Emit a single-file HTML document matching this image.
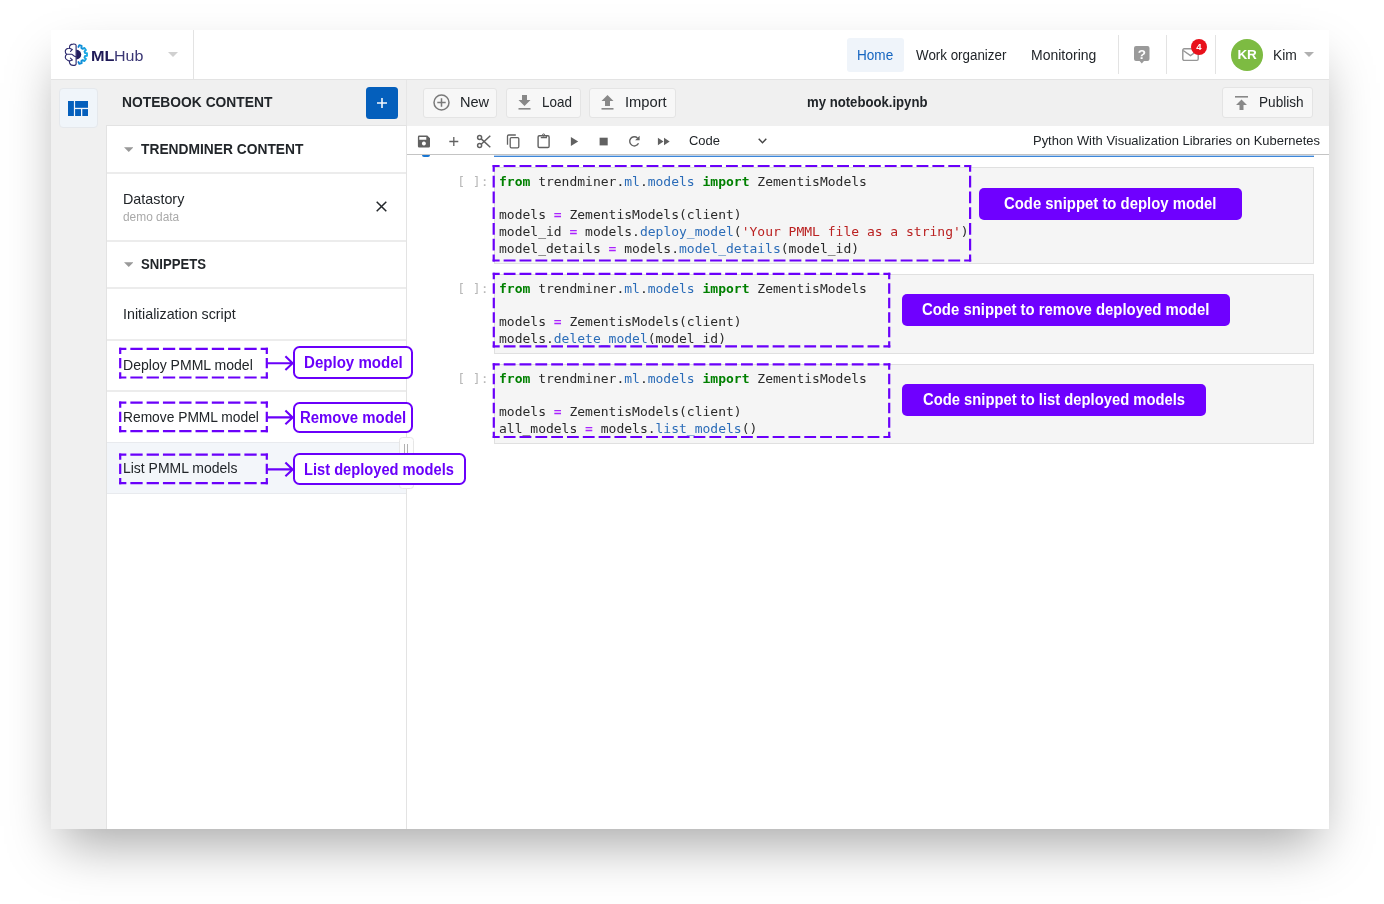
<!DOCTYPE html>
<html lang="en">
<head>
<meta charset="utf-8">
<title>MLHub - my notebook.ipynb</title>
<style>
*{box-sizing:border-box;margin:0;padding:0}
html,body{width:1384px;height:904px;overflow:hidden;background:#fff}
body{position:relative;will-change:transform;font-family:"Liberation Sans",sans-serif;color:#212529;font-size:14px}
.a{position:absolute}
.t{position:absolute;white-space:nowrap;line-height:1}
.win{left:50.500px;top:29.500px;width:1278.500px;height:799px;background:#fff;box-shadow:0 25px 50px -10px rgba(0,0,0,.35)}
.grey{background:#f0f0f0}
.ln{background:#e3e3e3}
.btn{background:#f7f7f7;border:1px solid #e4e4e4;border-radius:3px}
.b{font-weight:bold}
.pur{color:#6a00fa}
.lbl{border:2.200px solid #6a00fa;border-radius:6.500px;background:#fff}
.fill{background:#6f00ff;border-radius:5px}
.cell{background:#f5f5f5;border:1px solid #e0e0e0}
.code{position:absolute;white-space:pre;font-family:"DejaVu Sans Mono","Liberation Mono",monospace;font-size:13px;line-height:16.9px;color:#2a2a2a}
.k{color:#008000;font-weight:bold}
.o{color:#aa22ff;font-weight:bold}
.p{color:#2b6cb8}
.s{color:#ba2121}
.pr{color:#b8b8b8}
</style>
</head>
<body>
<!-- window -->
<div class="a win"></div>

<!-- header -->
<div class="a ln" style="left:51px;top:79px;width:1278px;height:1px"></div>
<div class="a ln" style="left:193px;top:30px;width:1px;height:49px"></div>


<!-- logo -->
<svg class="a" id="logo" style="left:60px;top:40px" width="35" height="30" viewBox="60 40 35 30" fill="none" stroke-linecap="round" stroke-linejoin="round">
  <defs><linearGradient id="gg" x1="77" y1="0" x2="88" y2="0" gradientUnits="userSpaceOnUse"><stop offset="0" stop-color="#0b78cc"/><stop offset="1" stop-color="#1cb2e8"/></linearGradient></defs>
  <path d="M76.100 45.600C76.100 44.300 74.400 43.900 73.100 44.100C71.200 44.300 69.600 45.300 69.600 46.800C69.500 47.400 69.500 47.900 69.500 48.300C68.800 48.200 68.200 48.300 67.600 48.500C66 49 65.200 50.300 65.300 51.600C65.300 52.800 65.800 53.700 66.500 54.300C65.800 55 65.300 56 65.300 57.300C65.300 58.800 66.200 59.800 67.600 60.200C68.200 60.600 68.800 60.900 69.500 61.100C69.400 61.700 69.500 62.300 69.600 62.900C70 64.400 71.400 65.400 73.100 65.400C74.600 65.500 76.100 65 76.100 63.900Z" stroke="#2d2a6e" stroke-width="1.150" fill="#fff"/>
  <path d="M66.500 54.300H71.600C72.800 54.300 73.300 56.400 76 56.800M69.500 48.300L72.400 49.400L70.500 51.400M69.500 61.100L72.400 59.900L70.400 58.200" stroke="#2d2a6e" stroke-width="1.100"/>
  <path d="M76.300 49.700A4.900 4.900 0 0 1 76.300 59.500Z" fill="#221c5c" stroke="none"/>
  <path d="M78.46 46.95L79.33 45.16L81.69 45.93L81.34 47.89L82.73 48.90L84.49 47.96L85.95 49.97L84.52 51.35L85.05 52.98L87.02 53.26L87.02 55.74L85.05 56.02L84.52 57.65L85.95 59.03L84.49 61.04L82.73 60.10L81.34 61.11L81.69 63.07L79.33 63.84L78.46 62.05" stroke="url(#gg)" stroke-width="1.900" stroke-linejoin="round"/>
</svg>
<div class="t b" id="lg-ml" style="left:91.2px;top:47.60px;font-size:15px;color:#1f1a57;transform:scaleX(1.0844);transform-origin:0 0">ML</div>
<div class="t" id="lg-hub" style="left:114.3px;top:47.60px;font-size:15px;color:#3b3775;transform:scaleX(1.0679);transform-origin:0 0">Hub</div>
<svg class="a" style="left:168px;top:52px" width="10" height="5" viewBox="0 0 10 5"><path d="M0 0H10L5 5Z" fill="#d0d0d0"/></svg>

<!-- nav -->
<div class="a" style="left:847px;top:38px;width:57px;height:34px;background:#eff4fa;border-radius:3px"></div>
<div class="t" id="nav-home" style="left:856.9px;top:48.15px;font-size:14px;color:#1565c0;transform:scaleX(0.9690);transform-origin:0 0">Home</div>
<div class="t" id="nav-work" style="left:916.3px;top:48.15px;font-size:14px;transform:scaleX(0.9549);transform-origin:0 0">Work organizer</div>
<div class="t" id="nav-mon" style="left:1030.5px;top:48.15px;font-size:14px;transform:scaleX(0.9989);transform-origin:0 0">Monitoring</div>
<div class="a ln" style="left:1118px;top:35px;width:1px;height:39px"></div>
<div class="a ln" style="left:1166px;top:35px;width:1px;height:39px"></div>
<div class="a ln" style="left:1215px;top:35px;width:1px;height:39px"></div>
<!-- help icon -->
<svg class="a" style="left:1134px;top:46px" width="16" height="18" viewBox="0 0 16 18"><path d="M2 0H13.500A2 2 0 0 1 15.500 2V13A2 2 0 0 1 13.500 15H10L7.800 17.600L5.600 15H2A2 2 0 0 1 0 13V2A2 2 0 0 1 2 0Z" fill="#9a9a9a"/><text x="7.800" y="12.600" font-family="Liberation Sans, sans-serif" font-weight="bold" font-size="13.500" fill="#fff" text-anchor="middle">?</text></svg>
<!-- mail icon -->
<svg class="a" style="left:1182px;top:48px" width="17" height="14" viewBox="0 0 17 14" fill="none" stroke="#969696" stroke-width="1.400"><rect x=".8" y=".8" width="15.400" height="11.600" rx="1.300"/><path d="M1.200 2.500L8.500 7.600L15.800 2.500"/></svg>
<div class="a" style="left:1191px;top:38.700px;width:16px;height:16px;border-radius:50%;background:#e8111b"></div>
<div class="t b" style="left:1191px;top:41.700px;width:16px;text-align:center;font-size:9.500px;color:#fff">4</div>
<!-- avatar -->
<div class="a" style="left:1230.800px;top:38.500px;width:32.200px;height:32.200px;border-radius:50%;background:#7dbb42"></div>
<div class="t b" style="left:1230.800px;top:47.800px;width:32.200px;text-align:center;font-size:13.500px;color:#fff;letter-spacing:-.3px">KR</div>
<div class="t" id="kim" style="left:1272.6px;top:48.15px;font-size:14px;transform:scaleX(0.9907);transform-origin:0 0">Kim</div>
<svg class="a" style="left:1303.700px;top:52px" width="10" height="5" viewBox="0 0 10 5"><path d="M0 0H10L5 5Z" fill="#b0b0b0"/></svg>

<!-- left rail + top bars -->
<div class="a grey" style="left:51px;top:80px;width:1278px;height:46px"></div>
<div class="a grey" style="left:51px;top:80px;width:56px;height:749px"></div>


<!-- rail icon -->
<div class="a" style="left:58.500px;top:88.400px;width:39px;height:39.300px;background:#f0f5fa;border:1px solid #e5e8ec;border-radius:4px"></div>
<svg class="a" style="left:68px;top:100.900px" width="20.200" height="15.300" viewBox="0 0 20.200 15.300" fill="#045fbc"><rect x="0" y="0" width="5.900" height="15.300"/><rect x="7.100" y="0" width="13.100" height="6.800"/><rect x="7.100" y="8.100" width="5.900" height="7.200"/><rect x="14.300" y="8.100" width="5.900" height="7.200"/></svg>

<!-- side panel -->
<div class="t b" id="nbc" style="left:121.7px;top:95.43px;font-size:14.5px;transform:scaleX(0.9526);transform-origin:0 0">NOTEBOOK CONTENT</div>
<div class="a" style="left:366px;top:86.700px;width:32px;height:32.300px;background:#045fbc;border-radius:3.500px"></div>
<div class="a" style="left:406px;top:80px;width:1px;height:46px;background:#e6e6e6"></div>
<svg class="a" style="left:377px;top:98px" width="10" height="10" viewBox="0 0 10 10" stroke="#f4f8fc" stroke-width="1.600"><path d="M5 0V10M0 5H10"/></svg>
<div class="a" style="left:106px;top:125px;width:301px;height:704px;background:#fff;border-left:1px solid #e3e3e3;border-right:1px solid #e3e3e3;border-top:1px solid #e3e3e3"></div>

<svg class="a" style="left:123.500px;top:146.500px" width="9.500" height="5" viewBox="0 0 10 5"><path d="M0 0H10L5 5Z" fill="#999"/></svg>
<div class="t b" id="tmc" style="left:140.9px;top:141.73px;font-size:14.5px;transform:scaleX(0.9509);transform-origin:0 0">TRENDMINER CONTENT</div>
<div class="a" style="left:107px;top:172px;width:299px;height:2px;background:#ececec"></div>
<div class="t" id="ds" style="left:122.9px;top:191.93px;font-size:14.5px;transform:scaleX(0.9877);transform-origin:0 0">Datastory</div>
<div class="t" id="dd" style="left:122.9px;top:211.34px;font-size:12px;color:#a9a9a9;transform:scaleX(0.9909);transform-origin:0 0">demo data</div>
<svg class="a" style="left:375.850px;top:201.400px" width="11" height="11" viewBox="0 0 11 11" stroke="#23272b" stroke-width="1.500" fill="none"><path d="M.7 .7L10.300 10.300M10.300 .7L.7 10.300"/></svg>
<div class="a" style="left:107px;top:240px;width:299px;height:2px;background:#ececec"></div>

<svg class="a" style="left:123.500px;top:262px" width="9.500" height="5" viewBox="0 0 10 5"><path d="M0 0H10L5 5Z" fill="#999"/></svg>
<div class="t b" id="snp" style="left:140.5px;top:257.33px;font-size:14.5px;transform:scaleX(0.9063);transform-origin:0 0">SNIPPETS</div>
<div class="a" style="left:107px;top:287px;width:299px;height:2px;background:#ececec"></div>
<div class="t" id="s0" style="left:122.8px;top:307.03px;font-size:14.5px;transform:scaleX(0.9848);transform-origin:0 0">Initialization script</div>
<div class="a" style="left:107px;top:339px;width:299px;height:2px;background:#ececec"></div>
<div class="t" id="s1" style="left:123.0px;top:358.13px;font-size:14.5px;transform:scaleX(0.9683);transform-origin:0 0">Deploy PMML model</div>
<div class="a" style="left:107px;top:390px;width:299px;height:2px;background:#ececec"></div>
<div class="t" id="s2" style="left:123.0px;top:409.53px;font-size:14.5px;transform:scaleX(0.9510);transform-origin:0 0">Remove PMML model</div>
<div class="a" style="left:107px;top:442px;width:299px;height:52px;background:#f3f6fa;border-top:1px solid #e8eaee;border-bottom:1px solid #e8eaee"></div>
<div class="t" id="s3" style="left:123.0px;top:460.83px;font-size:14.5px;transform:scaleX(0.9636);transform-origin:0 0">List PMML models</div>

<!-- resize handle -->
<div class="a" style="left:398.500px;top:436.600px;width:15.700px;height:52px;background:#fdfdfd;border:1px solid #e6e6e6;border-radius:3.500px"></div>
<div class="a" style="left:404.100px;top:443.500px;width:1.300px;height:10px;background:#b0b0b0"></div>
<div class="a" style="left:407.200px;top:443.500px;width:1.300px;height:10px;background:#b0b0b0"></div>


<!-- top buttons -->
<div class="a btn" style="left:423px;top:87.500px;width:74px;height:30.500px"></div>
<svg class="a" style="left:433px;top:94px" width="17" height="17" viewBox="0 0 17 17" fill="none" stroke="#7a7a7a" stroke-width="1.500"><circle cx="8.500" cy="8.500" r="7.500"/><path d="M8.500 4.300V12.700M4.300 8.500H12.700"/></svg>
<div class="t" id="b-new" style="left:459.6px;top:95.13px;font-size:14.5px;transform:scaleX(1.0029);transform-origin:0 0">New</div>
<div class="a btn" style="left:506px;top:87.500px;width:74.500px;height:30.500px"></div>
<svg class="a" style="left:518px;top:95px" width="13" height="15" viewBox="0 0 13 15" fill="#888"><path d="M4 0H9V5H12.500L6.500 11L.5 5H4Z"/><rect x=".5" y="13" width="12" height="1.600"/></svg>
<div class="t" id="b-load" style="left:542.3px;top:95.13px;font-size:14.5px;transform:scaleX(0.9267);transform-origin:0 0">Load</div>
<div class="a btn" style="left:589px;top:87.500px;width:86.500px;height:30.500px"></div>
<svg class="a" style="left:601px;top:95px" width="13" height="15" viewBox="0 0 13 15" fill="#888"><path d="M4 11H9V6H12.500L6.500 0L.5 6H4Z"/><rect x=".5" y="13" width="12" height="1.600"/></svg>
<div class="t" id="b-imp" style="left:625.4px;top:95.13px;font-size:14.5px;transform:scaleX(1.0148);transform-origin:0 0">Import</div>
<div class="t b" id="title" style="left:807.3px;top:95.03px;font-size:14.5px;transform:scaleX(0.9065);transform-origin:0 0">my notebook.ipynb</div>
<div class="a btn" style="left:1222px;top:87px;width:91px;height:31px"></div>
<svg class="a" style="left:1235px;top:95.500px" width="13" height="14" viewBox="0 0 13 14" fill="#888"><rect x="0" y="0" width="13" height="1.600"/><path d="M6.500 3.500L12 9H8.500V14H4.500V9H1Z"/></svg>
<div class="t" id="b-pub" style="left:1259.2px;top:95.13px;font-size:14.5px;transform:scaleX(0.9377);transform-origin:0 0">Publish</div>

<!-- notebook toolbar -->
<div class="a" style="left:407px;top:154px;width:922px;height:1px;background:#c4c4c4"></div>
<div class="t" id="code-sel" style="left:688.9px;top:134.00px;font-size:13px;transform:scaleX(0.9975);transform-origin:0 0">Code</div>
<svg class="a" style="left:757.500px;top:137.500px" width="9" height="6" viewBox="0 0 9 6" fill="none" stroke="#444" stroke-width="1.400"><path d="M.7 .8L4.500 4.800L8.300 .8"/></svg>
<div class="t" id="kernel" style="left:1033.1px;top:134.00px;font-size:13px;transform:scaleX(0.9959);transform-origin:0 0">Python With Visualization Libraries on Kubernetes</div>


<!-- toolbar icons -->
<svg class="a" id="tbicons" style="left:410px;top:128px" width="270" height="26" viewBox="410 128 270 26" fill="#616161">
  <!-- save -->
  <path fill-rule="evenodd" d="M419.200 135.600H427.300L430 138.300V146.200A1.300 1.300 0 0 1 428.700 147.500H419.200A1.300 1.300 0 0 1 417.900 146.200V136.900A1.300 1.300 0 0 1 419.200 135.600ZM419.300 137V139.800H426.300V137ZM423.900 141.600A2 2 0 1 0 423.910 141.600Z"/>
  <!-- plus -->
  <path d="M453.800 137V146M449.300 141.500H458.300" stroke="#616161" stroke-width="1.300" fill="none"/>
  <!-- scissors -->
  <g fill="none" stroke="#616161" stroke-width="1.500">
    <circle cx="479.600" cy="137.600" r="2"/><circle cx="479.600" cy="145.500" r="2"/>
    <path d="M481.200 138.900L490.300 147.300M481.200 144.200L490.300 135.800"/>
  </g>
  <!-- copy -->
  <g fill="none" stroke="#616161" stroke-width="1.300">
    <rect x="510.200" y="137.600" width="8.600" height="10.200" rx="1.200"/>
    <path d="M507.500 144.800V136.200A1.200 1.200 0 0 1 508.700 135H515.800"/>
  </g>
  <!-- paste -->
  <g fill="none" stroke="#616161" stroke-width="1.400">
    <rect x="538.100" y="135.800" width="11" height="11.700" rx="1.200"/>
    <path d="M540.800 137.600H546.400V135.800" stroke-width="1.200"/>
    <circle cx="543.600" cy="135" r="1.100" stroke-width="1"/>
  </g>
  <!-- play -->
  <path d="M570.900 137.100V145.900L578.200 141.500Z"/>
  <!-- stop -->
  <rect x="599.600" y="137.700" width="8.100" height="7.700"/>
  <!-- refresh -->
  <path d="M637.500 138A4.600 4.600 0 1 0 638.500 143.200" fill="none" stroke="#616161" stroke-width="1.400"/>
  <path d="M639.600 135.800V140.300H635.100Z"/>
  <!-- fast forward -->
  <path d="M657.900 137.800V145.200L663.500 141.500ZM664 137.800V145.200L669.700 141.500Z"/>
</svg>

<!-- selected cell remnants -->
<div class="a" style="left:494px;top:155px;width:820px;height:1px;background:#b9d2ee"></div>
<div class="a" style="left:494px;top:156px;width:820px;height:1px;background:#3d87da"></div>
<div class="a" style="left:421.500px;top:155px;width:8.500px;height:2px;background:#1976d2;border-radius:0 0 4px 4px"></div>

<!-- cells -->
<div class="a cell" style="left:494px;top:167px;width:820px;height:96.500px"></div>
<div class="a cell" style="left:494px;top:274px;width:820px;height:79.500px"></div>
<div class="a cell" style="left:494px;top:364px;width:820px;height:79.500px"></div>

<div class="code pr" style="left:457.200px;top:173.500px">[ ]:</div>
<div class="code pr" style="left:457.200px;top:280.500px">[ ]:</div>
<div class="code pr" style="left:457.200px;top:370.500px">[ ]:</div>

<div class="code" style="left:499px;top:173.500px"><span class="k">from</span> trendminer.<span class="p">ml</span>.<span class="p">models</span> <span class="k">import</span> ZementisModels

models <span class="o">=</span> ZementisModels(client)
model_id <span class="o">=</span> models.<span class="p">deploy_model</span>(<span class="s">'Your PMML file as a string'</span>)
model_details <span class="o">=</span> models.<span class="p">model_details</span>(model_id)</div>

<div class="code" style="left:499px;top:280.500px"><span class="k">from</span> trendminer.<span class="p">ml</span>.<span class="p">models</span> <span class="k">import</span> ZementisModels

models <span class="o">=</span> ZementisModels(client)
models.<span class="p">delete_model</span>(model_id)</div>

<div class="code" style="left:499px;top:370.500px"><span class="k">from</span> trendminer.<span class="p">ml</span>.<span class="p">models</span> <span class="k">import</span> ZementisModels

models <span class="o">=</span> ZementisModels(client)
all_models <span class="o">=</span> models.<span class="p">list_models</span>()</div>

<!-- annotations: dashed boxes -->

<!-- arrows -->

<svg class="a" id="annot" style="left:0;top:0" width="1384" height="904" viewBox="0 0 1384 904" fill="none" stroke="#6a00fa" stroke-width="2.2">
<path d="M492.60 166.00L971.20 166.00" stroke-dasharray="11.88 4.00" stroke-dashoffset="4.84"/>
<path d="M970.10 164.90L970.10 261.60" stroke-dasharray="11.75 4.00" stroke-dashoffset="4.78"/>
<path d="M492.60 260.50L971.20 260.50" stroke-dasharray="11.88 4.00" stroke-dashoffset="4.84"/>
<path d="M493.70 164.90L493.70 261.60" stroke-dasharray="11.75 4.00" stroke-dashoffset="4.78"/>
<path d="M492.70 273.90L890.30 273.90" stroke-dasharray="11.82 4.00" stroke-dashoffset="4.81"/>
<path d="M889.20 272.80L889.20 347.50" stroke-dasharray="10.50 4.00" stroke-dashoffset="4.15"/>
<path d="M492.70 346.40L890.30 346.40" stroke-dasharray="11.82 4.00" stroke-dashoffset="4.81"/>
<path d="M493.80 272.80L493.80 347.50" stroke-dasharray="10.50 4.00" stroke-dashoffset="4.15"/>
<path d="M492.70 364.40L890.30 364.40" stroke-dasharray="11.82 4.00" stroke-dashoffset="4.81"/>
<path d="M889.20 363.30L889.20 438.10" stroke-dasharray="10.52 4.00" stroke-dashoffset="4.16"/>
<path d="M492.70 437.00L890.30 437.00" stroke-dasharray="11.82 4.00" stroke-dashoffset="4.81"/>
<path d="M493.80 363.30L493.80 438.10" stroke-dasharray="10.52 4.00" stroke-dashoffset="4.16"/>
<path d="M119.10 348.80L267.90 348.80" stroke-dasharray="12.29 4.00" stroke-dashoffset="5.04"/>
<path d="M266.80 347.70L266.80 378.60" stroke-dasharray="10.35 4.00" stroke-dashoffset="4.07"/>
<path d="M119.10 377.50L267.90 377.50" stroke-dasharray="12.29 4.00" stroke-dashoffset="5.04"/>
<path d="M120.20 347.70L120.20 378.60" stroke-dasharray="10.35 4.00" stroke-dashoffset="4.07"/>
<path d="M119.10 402.60L267.90 402.60" stroke-dasharray="12.29 4.00" stroke-dashoffset="5.04"/>
<path d="M266.80 401.50L266.80 432.30" stroke-dasharray="10.30 4.00" stroke-dashoffset="4.05"/>
<path d="M119.10 431.20L267.90 431.20" stroke-dasharray="12.29 4.00" stroke-dashoffset="5.04"/>
<path d="M120.20 401.50L120.20 432.30" stroke-dasharray="10.30 4.00" stroke-dashoffset="4.05"/>
<path d="M119.10 454.60L267.90 454.60" stroke-dasharray="12.29 4.00" stroke-dashoffset="5.04"/>
<path d="M266.80 453.50L266.80 484.30" stroke-dasharray="10.30 4.00" stroke-dashoffset="4.05"/>
<path d="M119.10 483.20L267.90 483.20" stroke-dasharray="12.29 4.00" stroke-dashoffset="5.04"/>
<path d="M120.20 453.50L120.20 484.30" stroke-dasharray="10.30 4.00" stroke-dashoffset="4.05"/>
<path d="M267.5 363.2H292.5M285.4 356.3L292.6 363.2L285.4 370.1" stroke-width="2.1"/>
<path d="M267.5 417.4H292.5M285.4 410.5L292.6 417.4L285.4 424.3" stroke-width="2.1"/>
<path d="M267.5 469.4H292.5M285.4 462.5L292.6 469.4L285.4 476.3" stroke-width="2.1"/>
</svg>
<!-- outlined labels -->
<div class="a lbl" style="left:292.800px;top:346.200px;width:120.200px;height:32.500px"></div>
<div class="t b pur" id="l1" style="left:303.7px;top:354.76px;font-size:16px;transform:scaleX(0.9418);transform-origin:0 0">Deploy model</div>
<div class="a lbl" style="left:292.800px;top:401.600px;width:120.200px;height:31.800px"></div>
<div class="t b pur" id="l2" style="left:300.0px;top:410.26px;font-size:16px;transform:scaleX(0.9331);transform-origin:0 0">Remove model</div>
<div class="a lbl" style="left:292.800px;top:453.400px;width:172.800px;height:32px"></div>
<div class="t b pur" id="l3" style="left:304.3px;top:462.46px;font-size:16px;transform:scaleX(0.9163);transform-origin:0 0">List deployed models</div>

<!-- filled labels -->
<div class="a fill" style="left:979px;top:188px;width:263px;height:32px"></div>
<div class="t b" id="f1" style="left:1004.3px;top:196.26px;font-size:16px;color:#fff;transform:scaleX(0.9302);transform-origin:0 0">Code snippet to deploy model</div>
<div class="a fill" style="left:902px;top:294px;width:328px;height:32px"></div>
<div class="t b" id="f2" style="left:922.2px;top:302.26px;font-size:16px;color:#fff;transform:scaleX(0.9316);transform-origin:0 0">Code snippet to remove deployed model</div>
<div class="a fill" style="left:902px;top:383.500px;width:304px;height:32px"></div>
<div class="t b" id="f3" style="left:922.9px;top:391.96px;font-size:16px;color:#fff;transform:scaleX(0.9242);transform-origin:0 0">Code snippet to list deployed models</div>

</body>
</html>
